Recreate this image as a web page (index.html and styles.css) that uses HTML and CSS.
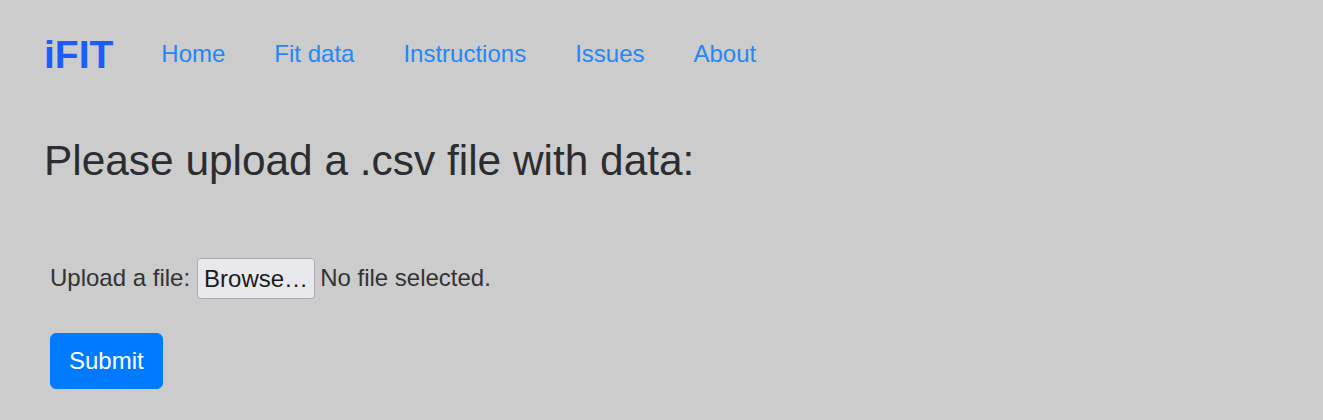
FILE: index.html
```html
<!DOCTYPE html>
<html lang="en">
<head>
<meta charset="utf-8">
<title>iFIT</title>
<link rel="stylesheet" href="styles.css">
</head>
<body>
  <nav class="navbar">
    <a class="brand" href="#">iFIT</a>
    <ul class="nav-links">
      <li><a href="#">Home</a></li>
      <li><a href="#">Fit data</a></li>
      <li><a href="#">Instructions</a></li>
      <li><a href="#">Issues</a></li>
      <li><a href="#">About</a></li>
    </ul>
  </nav>

  <main class="content">
    <h3 class="title">Please upload a .csv file with data:</h3>

    <form class="upload-form">
      <div class="file-row">
        <label class="file-label" for="datafile">Upload a file:</label>
        <label class="file-picker">
          <input id="datafile" class="file-input" type="file" accept=".csv">
          <span class="file-button">Browse…</span>
          <span class="file-name">No file selected.</span>
        </label>
      </div>
      <button class="btn-submit" type="submit">Submit</button>
    </form>
  </main>
</body>
</html>
```

FILE: styles.css
```css
* {
  box-sizing: border-box;
}

html, body {
  margin: 0;
  padding: 0;
}

body {
  background: #cccccc;
  font-family: "Liberation Sans", Arial, sans-serif;
  font-size: 24px;
  line-height: 1.5;
  color: #212529;
}

/* top navigation */
.navbar {
  display: flex;
  align-items: center;
  padding: 30px 44px 0 44px;
  height: 78px;
}

.brand {
  font-size: 39px;
  font-weight: bold;
  color: #1a5cff;
  text-decoration: none;
  line-height: 1;
  margin-right: 48px;
}

.nav-links {
  display: flex;
  gap: 49px;
  list-style: none;
  margin: 0;
  padding: 0;
}

.nav-links a {
  color: #2487f5;
  text-decoration: none;
  font-size: 24px;
}

/* page body */
.content {
  padding: 0 44px;
}

.title {
  margin: 58px 0 0 0;
  font-size: 42.4px;
  font-weight: 400;
  line-height: 1.2;
  color: #2b2d30;
}

.upload-form {
  padding: 71px 8px 0 6px;
}

.file-row {
  display: flex;
  align-items: center;
  gap: 7px;
  color: #333;
}

.file-picker {
  display: flex;
  align-items: center;
  gap: 5px;
  cursor: pointer;
}

.file-input {
  display: none;
}

.file-button {
  display: inline-block;
  height: 41px;
  padding: 0 6px;
  line-height: 39px;
  background: #e9e9ed;
  border: 1px solid #a9a9b1;
  border-radius: 4px;
  color: #1b1b1b;
}

.file-name {
  color: #333;
}

.btn-submit {
  display: block;
  margin-top: 34px;
  padding: 9px 18px;
  font-family: inherit;
  font-size: 24px;
  line-height: 36px;
  color: #fff;
  background: #007bff;
  border: 1px solid #007bff;
  border-radius: 6px;
  cursor: pointer;
}
```
